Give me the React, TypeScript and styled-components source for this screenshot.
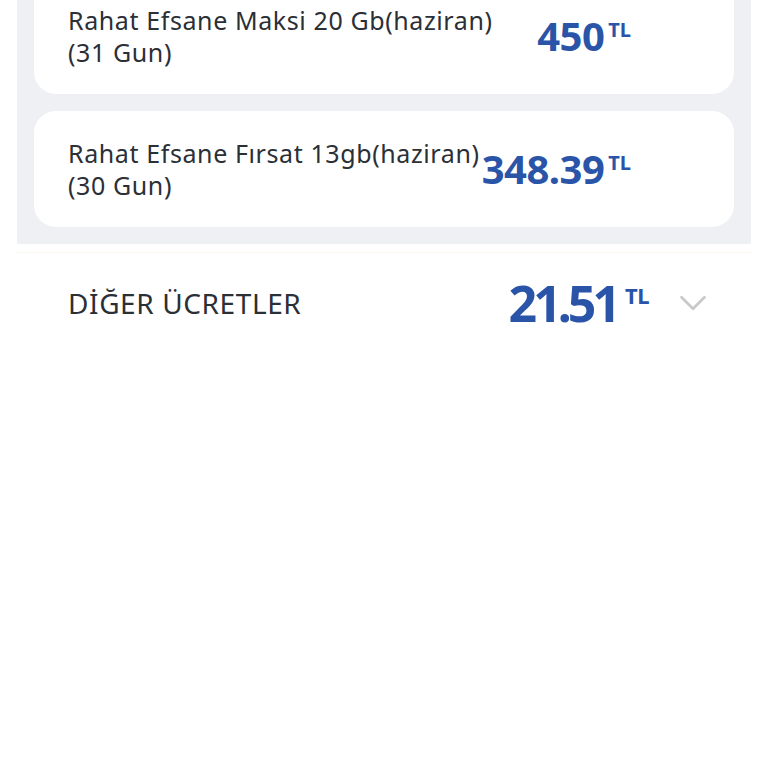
import React from "react";
import styled, { createGlobalStyle } from "styled-components";
import { ChevronDown } from "lucide-react";

const GlobalStyle = createGlobalStyle`
  body {
    margin: 0;
    background: #ffffff;
    font-family: "Noto Sans", "Liberation Sans", sans-serif;
  }
`;

const packages = [
  { name: "Rahat Efsane Maksi 20 Gb(haziran)", days: "(31 Gun)", price: "450" },
  { name: "Rahat Efsane Fırsat 13gb(haziran)", days: "(30 Gun)", price: "348.39" },
];

const App = () => {
  return (
    <Page>
      <GlobalStyle />
      <Panel>
        {packages.map((p) => (
          <Card key={p.name}>
            <Title>
              {p.name}
              <br />
              {p.days}
            </Title>
            <Price>
              <Amount>{p.price}</Amount>
              <Currency>TL</Currency>
            </Price>
          </Card>
        ))}
      </Panel>
      <Divider />
      <FeeRow>
        <FeeLabel>DİĞER ÜCRETLER</FeeLabel>
        <Price>
          <Amount $big>21.51</Amount>
          <Currency $big>TL</Currency>
        </Price>
        <Chevron>
          <ChevronDown size={46} strokeWidth={1.4} color="#c9c9c9" />
        </Chevron>
      </FeeRow>
    </Page>
  );
};

const Page = styled.div`
  width: 768px;
  height: 768px;
  overflow: hidden;
  background: #ffffff;
`;

const Panel = styled.div`
  margin: -39px 17px 0;
  padding: 17px;
  background: #eef0f3;
  display: flex;
  flex-direction: column;
  gap: 17px;
`;

const Card = styled.div`
  height: 116px;
  box-sizing: border-box;
  background: #ffffff;
  border-radius: 22px;
  padding: 0 103px 0 34px;
  display: flex;
  align-items: center;
`;

const Title = styled.div`
  flex: 1;
  font-size: 25px;
  line-height: 32px;
  color: #2b2f36;
  white-space: nowrap;
  letter-spacing: 0.6px;
`;

const Price = styled.div`
  display: flex;
  align-items: flex-start;
  color: #2a54a8;
  font-weight: 700;
`;

const Amount = styled.span<{ $big?: boolean }>`
  font-size: ${(p) => (p.$big ? "50px" : "40px")};
  line-height: 1;
  letter-spacing: ${(p) => (p.$big ? "-4px" : "-0.5px")};
`;

const Currency = styled.span<{ $big?: boolean }>`
  font-size: ${(p) => (p.$big ? "22px" : "20px")};
  line-height: 1;
  margin-left: ${(p) => (p.$big ? "8px" : "4px")};
  margin-top: ${(p) => (p.$big ? "6px" : "4px")};
  letter-spacing: ${(p) => (p.$big ? "-0.5px" : "0")};
`;

const Divider = styled.div`
  margin: 8px 17px 0;
  height: 1px;
  background: #fbf7ee;
`;

const FeeRow = styled.div`
  display: flex;
  align-items: center;
  padding: 25px 52px 0 68px;
`;

const FeeLabel = styled.div`
  flex: 1;
  font-size: 28px;
  color: #2b2f36;
  letter-spacing: 0.6px;
`;

const Chevron = styled.div`
  display: flex;
  margin-left: 21px;
`;

export default App;
